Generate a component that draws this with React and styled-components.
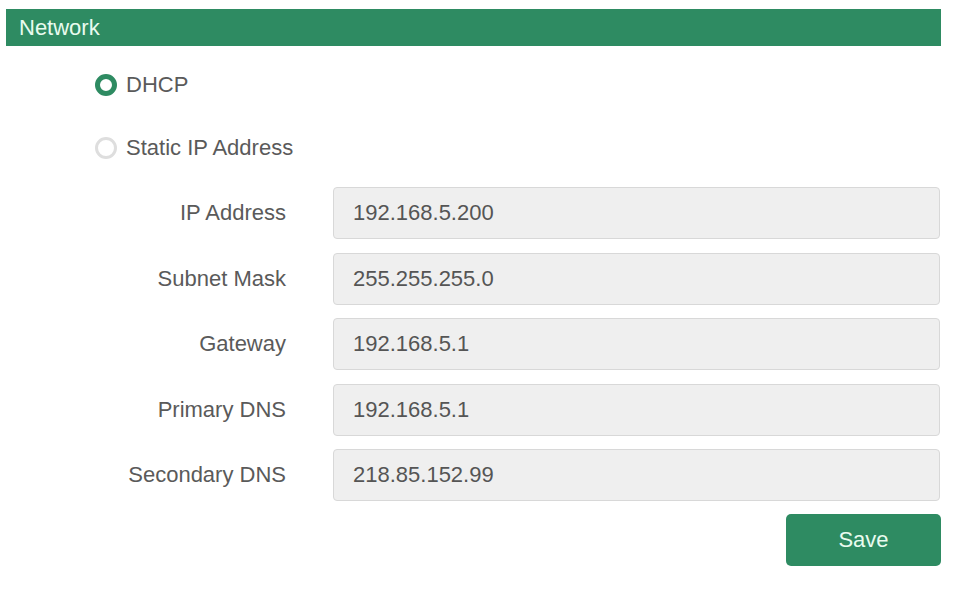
import { createGlobalStyle, styled } from "styled-components";

const GlobalStyle = createGlobalStyle`
  body {
    margin: 0;
    background: #ffffff;
    font-family: "Liberation Sans", Arial, sans-serif;
  }
`;

const Page = styled.div`
  width: 958px;
  padding: 9px 0 0 6px;
  box-sizing: border-box;
`;

const Header = styled.div`
  width: 935px;
  height: 37px;
  background: #2e8b62;
  color: #e9fbef;
  font-size: 22px;
  display: flex;
  align-items: center;
  padding-left: 13px;
  box-sizing: border-box;
`;

const RadioGroup = styled.div`
  display: flex;
  flex-direction: column;
  gap: 21px;
  padding: 18px 0 0 89px;
`;

const RadioRow = styled.label`
  display: flex;
  align-items: center;
  gap: 9px;
  height: 42px;
  font-size: 22px;
  color: #5a5a5a;
  cursor: pointer;
`;

const RadioDot = styled.span`
  width: 22px;
  height: 22px;
  border-radius: 50%;
  box-sizing: border-box;
  border: ${(p) => (p.checked ? "5px solid #2e8b62" : "3px solid #dedede")};
  background: #ffffff;
  flex-shrink: 0;
`;

const Form = styled.div`
  display: grid;
  grid-template-columns: 280px 607px;
  column-gap: 47px;
  row-gap: 13.5px;
  margin-top: 18px;
  align-items: center;
`;

const Label = styled.div`
  text-align: right;
  font-size: 22px;
  color: #5a5a5a;
`;

const Field = styled.div`
  height: 52px;
  box-sizing: border-box;
  background: #efefef;
  border: 1px solid #d8d8d8;
  border-radius: 4px;
  display: flex;
  align-items: center;
  padding-left: 19px;
  font-size: 22px;
  color: #555555;
`;

const Actions = styled.div`
  display: flex;
  justify-content: flex-end;
  width: 935px;
  margin-top: 13px;
`;

const SaveButton = styled.button`
  all: unset;
  width: 155px;
  height: 52px;
  background: #2e8b62;
  border-radius: 5px;
  color: #e9fbef;
  font-size: 22px;
  display: flex;
  justify-content: center;
  align-items: center;
  cursor: pointer;
`;

const fields = [
  ["IP Address", "192.168.5.200"],
  ["Subnet Mask", "255.255.255.0"],
  ["Gateway", "192.168.5.1"],
  ["Primary DNS", "192.168.5.1"],
  ["Secondary DNS", "218.85.152.99"],
];

const App = () => {
  return (
    <Page>
      <GlobalStyle />
      <Header>Network</Header>
      <RadioGroup>
        <RadioRow>
          <RadioDot checked />
          DHCP
        </RadioRow>
        <RadioRow>
          <RadioDot />
          Static IP Address
        </RadioRow>
      </RadioGroup>
      <Form>
        {fields.map(([label, value]) => (
          <>
            <Label key={label + "l"}>{label}</Label>
            <Field key={label + "v"}>{value}</Field>
          </>
        ))}
      </Form>
      <Actions>
        <SaveButton>Save</SaveButton>
      </Actions>
    </Page>
  );
};

export default App;
